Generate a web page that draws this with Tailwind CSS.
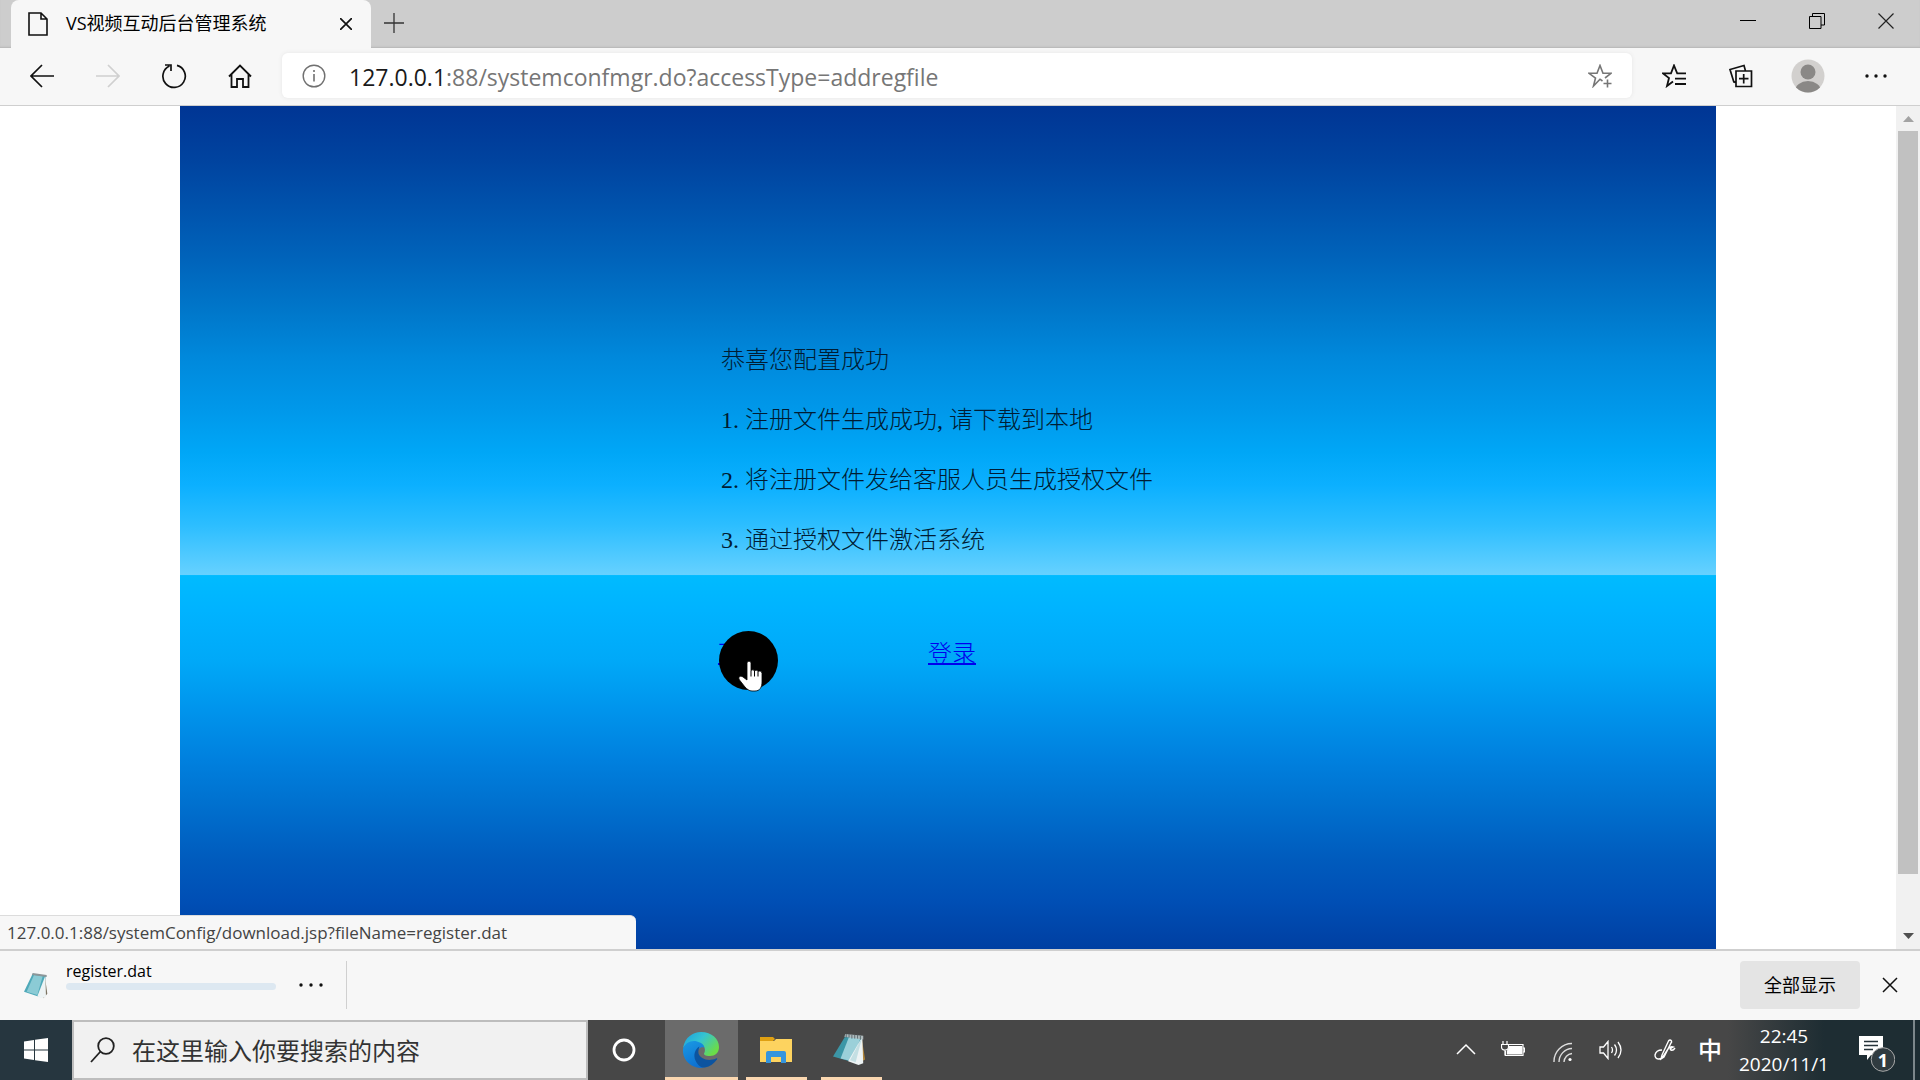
<!DOCTYPE html>
<html lang="zh-CN">
<head>
<meta charset="utf-8">
<title>VS视频互动后台管理系统</title>
<script src="https://cdn.jsdelivr.net/npm/@tailwindcss/browser@4"></script>
</head>
<body class="flex h-screen flex-col overflow-hidden bg-white font-['Open_Sans','Noto_Sans_CJK_SC',sans-serif] text-black">

<!-- Tab strip -->
<header class="flex h-12 shrink-0 bg-[#cdcdcd] pl-[11px] shadow-[inset_0_-2px_2px_-1px_#b5b5b5]">
  <div class="flex w-[360px] items-center rounded-t-lg bg-[#f7f7f7] pr-[15px] pl-4">
    <svg class="h-6 w-[22px] shrink-0" viewBox="0 0 22 24" fill="none" stroke="#111" stroke-width="1.6"><path d="M2 1h12l6 6v16H2zM14 1v6h6"/></svg>
    <span class="ml-[17px] flex-1 pb-[2px] text-lg leading-6 whitespace-nowrap">VS视频互动后台管理系统</span>
    <button class="flex h-6 w-5 items-center justify-center" aria-label="关闭标签页"><svg class="h-3 w-3" viewBox="0 0 12 12" stroke="#111" stroke-width="1.7"><path d="M0 0l12 12M12 0L0 12"/></svg></button>
  </div>
  <button class="flex w-[46px] items-center justify-center pb-[2px]" aria-label="新建标签页"><svg class="h-5 w-5" viewBox="0 0 20 20" stroke="#333" stroke-width="1.3"><path d="M10 0v20M0 10h20"/></svg></button>
  <div class="ml-auto flex h-[42px]">
    <button class="flex w-[69px] items-center justify-center" aria-label="最小化"><svg class="h-4 w-4" viewBox="0 0 16 16" stroke="#000"><path d="M0 7.5h16"/></svg></button>
    <button class="flex w-[69px] items-center justify-center" aria-label="还原"><svg class="h-4 w-4" viewBox="0 0 16 16" fill="none" stroke="#000"><path d="M.5 3.5h11.500v12H.5zM3.500 3.500V.5h12v11.500h-3.500"/></svg></button>
    <button class="flex w-[69px] items-center justify-center" aria-label="关闭"><svg class="h-4 w-4" viewBox="0 0 16 16" stroke="#222" stroke-width="1.2"><path d="M.5.5l15 15M15.500.5l-15 15"/></svg></button>
  </div>
</header>

<!-- Toolbar -->
<nav class="flex h-[58px] shrink-0 items-center border-b border-[#cfcfcf] bg-[#f7f7f7] pr-[9px] pb-[2px] pl-[9px]">
  <button class="flex w-[66px] justify-center" aria-label="后退"><svg class="h-6 w-6" viewBox="0 0 24 24" fill="none" stroke="#111" stroke-width="1.7"><path d="M24 12H1M12 1L1 12l11 11"/></svg></button>
  <button class="flex w-[66px] justify-center" aria-label="前进" disabled><svg class="h-6 w-6" viewBox="0 0 24 24" fill="none" stroke="#d0d0d0" stroke-width="1.7"><path d="M0 12h23M12 1l11 11-11 11"/></svg></button>
  <button class="flex w-[66px] justify-center" aria-label="刷新"><svg class="h-[26px] w-[26px]" viewBox="0 0 26 26" fill="none" stroke="#111" stroke-width="1.7"><path d="M16 2.400A11.200 11.200 0 1 1 8.500 3M4 2h6v6"/></svg></button>
  <button class="flex w-[66px] justify-center" aria-label="主页"><svg class="h-6 w-6" viewBox="0 0 24 24" fill="none" stroke="#111" stroke-width="1.8"><path d="M1 12.500L12 1.500l11 11M3.500 10.500V23H9v-8h6v8h5.500V10.500"/></svg></button>
  <label class="ml-[9px] flex h-[45px] flex-1 items-center rounded-md bg-white px-5 shadow-[0_0_4px_#e6e6e6]">
    <svg class="h-6 w-6 shrink-0" viewBox="0 0 24 24" fill="none" stroke="#707070" stroke-width="1.4"><circle cx="12" cy="12" r="10.800"/><path d="M12 10v7.500M12 6v2" stroke-width="1.600"/></svg>
    <span class="ml-[23px] flex-1 pt-[2px] text-[23px] leading-8 whitespace-nowrap text-[#767676]"><span class="text-[#1a1a1a]">127.0.0.1</span>:88/systemconfmgr.do?accessType=addregfile</span>
    <svg class="h-6 w-6 shrink-0" viewBox="0 0 24 24" fill="none" stroke="#767676" stroke-width="1.6"><path d="M14.500 17l-2.500-1.800L5.500 22 7.500 14 1 9.300h8L12 1.500l3 7.800h8l-6 4.700M15.500 19.500h8M19.500 15.500v8"/></svg>
  </label>
  <button class="ml-2 flex w-[67px] justify-center" aria-label="收藏夹"><svg class="h-6 w-6" viewBox="0 0 24 24" fill="none" stroke="#111" stroke-width="1.800"><path d="M24 9.400h-8.800L12 1.500 9 9.400H1L7 14 5 22l6-4.500M13 14.700h11M13 20h11"/></svg></button>
  <button class="flex w-[67px] justify-center" aria-label="集锦"><svg class="h-6 w-6" viewBox="0 0 24 24" fill="none" stroke="#111" stroke-width="1.700"><path d="M7 7h15.500v15.500H7zM14.700 10v9.500M10 14.700h9.500M5 18.500L1 5.500l14-4 1.500 5.500M5 18.500l2-1"/></svg></button>
  <button class="flex w-[67px] justify-center" aria-label="个人资料"><svg class="h-[34px] w-[34px]" viewBox="0 0 34 34"><defs><clipPath id="av"><circle cx="17" cy="17" r="16.500"/></clipPath></defs><circle cx="17" cy="17" r="16.500" fill="#d2d0ce"/><g fill="#8a8886" clip-path="url(#av)"><circle cx="17" cy="13" r="7.500"/><ellipse cx="17" cy="32" rx="13" ry="10"/></g></svg></button>
  <button class="flex w-[70px] justify-center" aria-label="设置及更多"><svg class="h-6 w-6" viewBox="0 0 24 24" fill="#111"><circle cx="3" cy="12" r="1.700"/><circle cx="12" cy="12" r="1.700"/><circle cx="21" cy="12" r="1.700"/></svg></button>
</nav>

<!-- Page viewport -->
<div class="relative flex min-h-0 flex-1">
  <div class="flex flex-1 justify-center bg-white">
    <main class="flex w-[81%] justify-center bg-[linear-gradient(#003594_0%,#00439f_6.4%,#0052ac_11.9%,#0064bb_18.3%,#0078cb_24.6%,#0089dc_30%,#0098ea_36%,#00a7f7_41.2%,#0cb0ff_45%,#2dbeff_49.8%,#66d1ff_55.6%,#00bbff_55.7%,#00b3ff_59.8%,#00a9f8_65.7%,#0094ec_71.7%,#0080de_77.6%,#0072d0_82.3%,#005bbd_89.4%,#004fb5_94.2%,#003fa2_100%)] pt-56">
      <div class="w-[460px] font-['Liberation_Serif','Noto_Sans_CJK_SC',serif] text-2xl font-light whitespace-nowrap text-[#001c33]">
        <div class="pl-[3px] leading-[60px]">
          <p>恭喜您配置成功</p>
          <p><span class="inline-block w-6">1.</span>注册文件生成成功<span class="inline-block w-3">,</span>请下载到本地</p>
          <p><span class="inline-block w-6">2.</span>将注册文件发给客服人员生成授权文件</p>
          <p><span class="inline-block w-6">3.</span>通过授权文件激活系统</p>
        </div>
        <div class="mt-[54px] flex leading-[60px] text-[#0000ee]">
          <div class="relative w-[210px]">
            <a href="#" class="underline decoration-2">下载</a>
            <svg class="absolute top-[7px] left-px h-[62px] w-[60px]" viewBox="0 0 60 62"><circle cx="29.500" cy="29.500" r="29.500"/><path d="M28 32.500c0-3 4-3 4 0v7c1-1 3-1 3.500.5 1-1 3-1 3.500.5 1-1 4-.500 4 2V51c0 5-2 9-7 9h-3c-3 0-5-2-7-4l-5.500-7c-2-3 1-5 3.500-3l4 3z" fill="#fff" stroke="#000" stroke-width=".8"/><path d="M32 39.500v6M35.500 40v5.500M39 40.500v5" stroke="#000"/></svg>
          </div>
          <a href="#" class="underline decoration-2">登录</a>
        </div>
      </div>
    </main>
  </div>
  <!-- Scroll bar -->
  <div class="flex w-6 flex-col items-center bg-[#f1f1f1] px-[2px]">
    <svg class="h-[25px] w-[11px]" viewBox="0 0 11 25" fill="#a3a3a3"><path d="M0 16h11L5.500 10z"/></svg>
    <div class="w-full flex-1 bg-[#c1c1c1]"></div>
    <svg class="mt-[49px] h-[26px] w-[11px]" viewBox="0 0 11 26" fill="#505050"><path d="M0 10h11L5.500 16z"/></svg>
  </div>
  <!-- Link target -->
  <div class="absolute bottom-0 left-0 h-[34px] w-[636px] rounded-tr-md border-t border-[#dcdcdc] bg-[#f7f7f7] pt-px pl-[7px] text-[17px] leading-8 text-[#444]">127.0.0.1:88/systemConfig/download.jsp?fileName=register.dat</div>
</div>

<!-- Downloads -->
<section class="flex h-[71px] shrink-0 items-center border-t-2 border-[#cfcfcf] bg-[#f7f7f7] pr-[22px] pb-[2px] pl-6">
  <svg class="h-7 w-6" viewBox="0 0 36 42"><path d="M31 6l4 28-6 7z" fill="#7c7361"/><path d="M13 4l20 3-6 33L0 31z" fill="#4fa9b9"/><path d="M15 6l13 2-8 28L4 31z" fill="#8bcbd5"/><path d="M32 7l1 32-8 2-5-3z" fill="#edf3f4"/><path d="M13 3l21 3v3L12 6z" fill="#8c9699"/></svg>
  <div class="ml-[18px] flex h-12 w-[210px] flex-col">
    <span class="text-base leading-5">register.dat</span>
    <div class="mt-[2px] h-[7px] rounded-sm bg-[#dde8f1]"></div>
  </div>
  <button class="flex w-[70px] justify-center" aria-label="下载选项"><svg class="h-6 w-6" viewBox="0 0 24 24" fill="#111"><circle cx="2" cy="12" r="1.700"/><circle cx="12" cy="12" r="1.700"/><circle cx="22" cy="12" r="1.700"/></svg></button>
  <div class="h-12 w-px bg-[#d0d0d0]"></div>
  <button class="ml-auto h-12 w-[120px] rounded-sm bg-[#e4e4e4] text-lg">全部显示</button>
  <button class="ml-[22px] h-4 w-4" aria-label="关闭下载栏"><svg class="h-4 w-4" viewBox="0 0 16 16" stroke="#111" stroke-width="1.500"><path d="M1 1l14 14M15 1L1 15"/></svg></button>
</section>

<!-- Task bar -->
<footer class="flex h-[60px] shrink-0 bg-[linear-gradient(90deg,#474747_0%,#474747_90%,#1e2d33_95%,#1e2d33_100%)] text-white">
  <button class="flex w-[72px] items-center justify-center bg-[#26363f]" aria-label="开始"><svg class="h-6 w-6" viewBox="0 0 24 24" fill="#fff"><path d="M0 3.500L10 2v9.500H0zM11 1.800L24 0v11.500H11zM0 12.500h10V22L0 20.500zM11 12.500h13V24l-13-1.800z"/></svg></button>
  <label class="flex w-[516px] items-center border-2 border-[#bdbdbd] bg-[#f1f1f1] pl-4">
    <svg class="h-[26px] w-[26px] shrink-0" viewBox="0 0 26 26" fill="none" stroke="#222" stroke-width="1.800"><circle cx="16" cy="9" r="7.800"/><path d="M10.500 14.500L1 25"/></svg>
    <input class="ml-4 h-9 w-full bg-transparent text-2xl font-normal text-[#333] outline-none placeholder:text-[#333] placeholder:opacity-100" aria-label="搜索" placeholder="在这里输入你要搜索的内容">
  </label>
  <button class="flex w-[77px] items-center justify-center pr-[6px]" aria-label="Cortana"><svg class="h-6 w-6" viewBox="0 0 24 24"><circle cx="12" cy="12" r="10" fill="none" stroke="#fff" stroke-width="2.800"/></svg></button>
  <button class="flex w-[73px] items-center justify-center border-b-[3px] border-[#fad7b0] bg-[#6b6b6b] pt-[2px] pr-[2px]" aria-label="Microsoft Edge">
    <svg class="h-9 w-9" viewBox="0 0 36 36"><defs><linearGradient id="eg" x1="0" y1="0" x2="1" y2=".6"><stop offset="0" stop-color="#1a9fe0"/><stop offset=".5" stop-color="#35c4d2"/><stop offset="1" stop-color="#6bdc48"/></linearGradient><linearGradient id="eb" x1="0" y1="0" x2=".5" y2="1"><stop offset="0" stop-color="#1a9ae4"/><stop offset="1" stop-color="#0d6fd0"/></linearGradient></defs><path d="M0 16C2 5 10 0 18 0c11 0 18 7 18 15 0 6-4 9-9 9-5 0-7-1.500-5.500-3.500C23 17 21 12 15 11 8 10 3 12 0 16z" fill="url(#eg)"/><path d="M0 17c2-6 8-9 14-7.500 4 1 7 3 7.500 6-5-1.500-8 3-6.500 8 2 6 6 8 11 8-3 3-6 4.500-9 4.500C8 35.500-1 28 0 17z" fill="url(#eb)"/><path d="M16.500 14.500C12 17 10 23 12.500 28.500 15 34 19 36 22 35.500c5-1 9-4 12-8 .5-1 0-1.500-1-1-8 3.500-16 0-17.500-5-.5-3 .5-5.500 1-7z" fill="#0c54a0"/></svg>
  </button>
  <button class="ml-2 flex w-[61px] items-center justify-center border-b-[3px] border-[#fad7b0] pt-[2px] pr-[2px]" aria-label="文件资源管理器">
    <svg class="h-7 w-8" viewBox="0 0 32 28"><path d="M0 5h14l2-2h16v23H0z" fill="#fdd35f"/><path d="M0 1h13l2 2-2 2H0z" fill="#dfa012"/><path d="M6 27V17q0-2 2-2h16q2 0 2 2v10h-5v-6H11v6z" fill="#3595dd"/></svg>
  </button>
  <button class="ml-[14px] flex w-[61px] items-center justify-center border-b-[3px] border-[#fad7b0] pr-1" aria-label="记事本">
    <svg class="h-[34px] w-[34px]" viewBox="0 0 36 36"><path d="M30 4l4 25-7 4z" fill="#b0853c"/><path d="M14 3l17 2-6 28L0 26z" fill="#3c96a6"/><path d="M17 5l12 2-9 24-12-3z" fill="#9bd0d9"/><path d="M31 5l1 28-5 2-11-4z" fill="#edf3f4"/><path d="M31 5L18 30l6 2z" fill="#c4dfe3"/><path d="M13 2l19 2v4L12 5z" fill="#aeb9bc"/><path d="M14 2v4M17 2v4M20 3v4M23 3v4M26 3v4M29 4v4" stroke="#59696d"/></svg>
  </button>
  <div class="ml-auto flex items-center">
    <button class="mr-[25px]" aria-label="显示隐藏的图标"><svg class="h-5 w-5" viewBox="0 0 20 20" fill="none" stroke="#fff" stroke-width="1.500"><path d="M1 14l9-9 9 9"/></svg></button>
    <svg class="mr-7 h-5 w-6" viewBox="0 0 24 20" fill="none" stroke="#fff" stroke-width="1.200"><path d="M7 4.500h15v11H4.500V11M22.500 8h1v4h-1"/><path d="M8 6.500h12.500v7.500H6.500v-3L8 9z" fill="#fff"/><path d="M2 1v4M6 1v4M.5 4.500h7V7q0 3-3.500 3T.5 7zM4 10v5.500"/></svg>
    <svg class="mt-1 mr-[26px] h-5 w-5" viewBox="0 0 20 20" fill="none" stroke="#ddd" stroke-width="1.400"><path d="M1 20A18 18 0 0 1 19 1.500M6 20A13.500 13.500 0 0 1 19 6.500M11 20a9 9 0 0 1 8-8.500"/><circle cx="17" cy="17.500" r="1.600" fill="#fff" stroke="none"/></svg>
    <svg class="mr-[31px] h-5 w-6" viewBox="0 0 24 20" fill="none" stroke="#fff" stroke-width="1.300"><path d="M1 7h3.500L9 1.500v17L4.500 13H1zM12.500 7q2 3 0 6M15.500 4.500q4 5.500 0 11M19 2q6 8 0 16"/></svg>
    <svg class="mr-[22px] h-[22px] w-[22px]" viewBox="0 0 22 22" fill="none" stroke="#fff" stroke-width="1.400"><path d="M8 16L14.500 2q1.500-2 3 0 .5 1-.5 2L10 18l-3 2zM8 11q-6 0-7 5c0 5 6 5 8 1.500l5-7.500q2-3 5-2-4 2-2 3t4-2"/></svg>
    <span class="mr-4 w-6 text-center text-2xl leading-8 font-medium">中</span>
    <time class="w-[92px] text-center text-[19px] leading-7 whitespace-nowrap">22:45<br>2020/11/1</time>
    <button class="relative mt-2 ml-[29px] h-9 w-9" aria-label="通知">
      <svg class="h-9 w-9" viewBox="0 0 36 36"><path d="M0 0h24v19H12l-4 5v-5H0z" fill="#fff"/><path d="M5 5.500h14M5 9.500h14M5 13.500h9" stroke="#26333a" stroke-width="1.300"/><circle cx="24" cy="23.500" r="11.800" fill="#303b40" stroke="#aaa"/></svg>
      <span class="absolute right-[7px] bottom-0 text-lg leading-6 font-bold">1</span>
    </button>
    <div class="ml-[18px] h-full w-[7px] border-l-2 border-[#7d878b]"></div>
  </div>
</footer>
</body>
</html>
